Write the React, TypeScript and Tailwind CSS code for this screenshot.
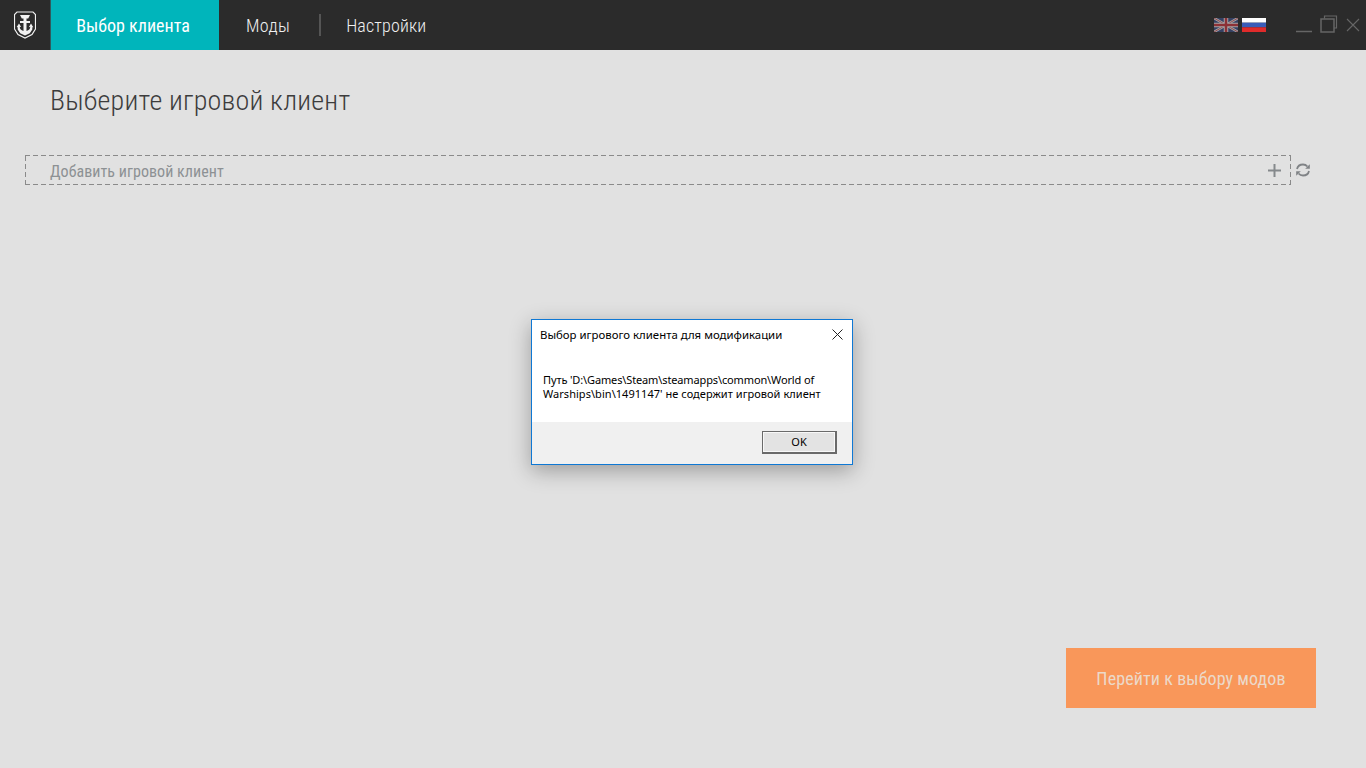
const narrow = { fontFamily: '"Roboto Condensed", "Liberation Sans", sans-serif' };

function Logo() {
  return (
    <svg width="22" height="28" viewBox="0 0 22 28" className="block">
      <path d="M3 1h16l2.500 2.500V18l-3.500 5.500-7 3.500-7-3.500L.5 18V3.500z" fill="#2b2b2b" stroke="#f2f2f2" strokeWidth="1.200" />
      <path d="M6 4h10l-1.800 3.500h-1.700v2.500h3.500v2h-3.500v8c2.500-.5 3.700-2.200 3.800-4.200l-1.500.4 2.200-3.700 2.300 3.700-1 .1v2.200l-2.500 3.800L11 24.500l-4.800-2.300-2.500-3.800V16.200l-1-.1L5 12.400l2.200 3.700-1.500-.4c.1 2 1.300 3.700 3.800 4.200v-8H6v-2h3.500V7.500H7.800z" fill="#f2f2f2" />
    </svg>
  );
}

function FlagUK() {
  return (
    <svg width="24" height="14" viewBox="0 0 24 14" className="block opacity-70">
      <rect width="24" height="14" fill="#3a4a7c" />
      <path d="M0 0L24 14M24 0L0 14" stroke="#d8d8d8" strokeWidth="2.400" />
      <path d="M0 0L24 14M24 0L0 14" stroke="#b5343c" strokeWidth="0.800" />
      <path d="M12 0V14M0 7H24" stroke="#d8d8d8" strokeWidth="4.500" />
      <path d="M12 0V14M0 7H24" stroke="#b5343c" strokeWidth="2.500" />
    </svg>
  );
}

function FlagRU() {
  return (
    <svg width="24" height="14" viewBox="0 0 24 14" className="block">
      <rect width="24" height="4.700" fill="#ffffff" />
      <rect y="4.700" width="24" height="4.600" fill="#3a5cb8" />
      <rect y="9.300" width="24" height="4.700" fill="#e02b2b" />
    </svg>
  );
}

export default function App() {
  return (
    <div className="relative flex h-[768px] w-[1366px] flex-col overflow-hidden bg-[#e1e1e1]" style={narrow}>
      <header className="flex h-[50px] shrink-0 items-center bg-[#2b2b2b]">
        <div className="flex h-full w-[51px] items-center justify-center border-r border-[#2f5a5e]">
          <Logo />
        </div>
        <div className="flex h-full w-[168px] items-center justify-center bg-[#00b5bb] pr-[4px] text-[18px] text-white">
          Выбор клиента
        </div>
        <div className="ml-[27px] text-[18px] font-light tracking-[0.4px] text-[#f0f0f0]">Моды</div>
        <div className="ml-[29px] h-[22px] w-[2px] bg-[#555555]" />
        <div className="ml-[25px] text-[18px] font-light tracking-[0.15px] text-[#f0f0f0]">Настройки</div>
        <div className="ml-auto flex items-center gap-1 pr-[100px]">
          <FlagUK />
          <FlagRU />
        </div>
        <div className="absolute right-[6px] top-[15px] flex items-start gap-[8px]">
          <svg width="16" height="18" viewBox="0 0 16 18" className="block">
            <path d="M0 16.500H16" stroke="#666666" strokeWidth="1.500" />
          </svg>
          <svg width="18" height="18" viewBox="0 0 18 18" className="block">
            <path d="M4.500 3.500V1H16.500V13H14" fill="none" stroke="#666666" strokeWidth="1.200" />
            <rect x="1" y="4" width="13" height="13" fill="none" stroke="#666666" strokeWidth="1.500" />
          </svg>
          <svg width="14" height="14" viewBox="0 0 14 14" className="mt-[3px] block">
            <path d="M1 1L13 13M13 1L1 13" stroke="#666666" strokeWidth="1.100" />
          </svg>
        </div>
      </header>

      <main className="flex flex-1 flex-col">
        <h1 className="ml-[50px] mt-[33px] text-[28px] font-light leading-[36px] tracking-[0.23px] text-[#3c3c3c]">Выберите игровой клиент</h1>
        <div className="ml-[25px] mt-[36px] flex items-center gap-[4px]">
          <div className="flex h-[30px] w-[1266px] items-center justify-between pl-[25px] pr-[10px] text-[16px] text-[#8d9194] [background:repeating-linear-gradient(90deg,#8a8a8a_0_5px,transparent_5px_8px)_0_0/100%_1px_no-repeat,repeating-linear-gradient(90deg,#8a8a8a_0_5px,transparent_5px_8px)_0_100%/100%_1px_no-repeat,repeating-linear-gradient(0deg,#8a8a8a_0_5px,transparent_5px_8px)_0_0/1px_100%_no-repeat,repeating-linear-gradient(0deg,#8a8a8a_0_5px,transparent_5px_8px)_100%_0/1px_100%_no-repeat]">
            <span className="pt-[3px] tracking-[0.05px]">Добавить игровой клиент</span>
            <svg width="13" height="13" viewBox="0 0 13 13" className="block">
              <path d="M6.500 0V13M0 6.500H13" stroke="#85898c" strokeWidth="2" />
            </svg>
          </div>
          <svg width="16" height="16" viewBox="0 0 16 16" className="block">
            <path d="M2 7C2.600 4.300 5 2.500 8 2.500c1.900 0 3.400.8 4.400 2" fill="none" stroke="#808386" strokeWidth="1.800" />
            <path d="M14.800 2.200V6.800H10.200z" fill="#808386" />
            <path d="M14 9c-.6 2.700-3 4.500-6 4.500-1.900 0-3.400-.8-4.400-2" fill="none" stroke="#808386" strokeWidth="1.800" />
            <path d="M1.200 13.800V9.200H5.800z" fill="#808386" />
          </svg>
        </div>
        <div className="mt-auto flex justify-end pb-[60px] pr-[50px]">
          <button className="h-[60px] w-[250px] bg-[#f9975a] text-[18px] tracking-[0.1px] text-[#ecd9c9]">Перейти к выбору модов</button>
        </div>
      </main>

      <div
        className="absolute left-[531px] top-[319px] flex h-[146px] w-[322px] flex-col border border-[#0f78d4] bg-white shadow-[0_6px_20px_rgba(0,0,0,0.3)]"
        style={{ fontFamily: '"Noto Sans", "Open Sans", sans-serif' }}
      >
        <div className="flex h-[30px] shrink-0 items-center justify-between pl-[8px] pr-[9px] text-[11.400px] text-black">
          <span>Выбор игрового клиента для модификации</span>
          <svg width="11" height="11" viewBox="0 0 11 11" className="mb-[2px] block">
            <path d="M0.500 0.500L10.500 10.500M10.500 0.500L0.500 10.500" stroke="#222222" strokeWidth="1" />
          </svg>
        </div>
        <div className="flex-1 pl-[11px] pr-[12px] pt-[23px] text-[11px] leading-[14px] text-black">
          <span className="tracking-[-0.130px]">Путь 'D:\Games\Steam\steamapps\common\World of</span>
          <br />
          <span className="tracking-[0.04px]">Warships\bin\1491147' не содержит игровой клиент</span>
        </div>
        <div className="flex h-[42px] shrink-0 items-start justify-end bg-[#f0f0f0] pr-[15px] pt-[9px]">
          <button className="h-[23px] w-[75px] border border-b-2 border-r-2 border-[#6a6a6a] bg-[#e3e3e3] text-[11px] text-black shadow-[inset_0_0_0_1px_#f8f8f8]">OK</button>
        </div>
      </div>
    </div>
  );
}
